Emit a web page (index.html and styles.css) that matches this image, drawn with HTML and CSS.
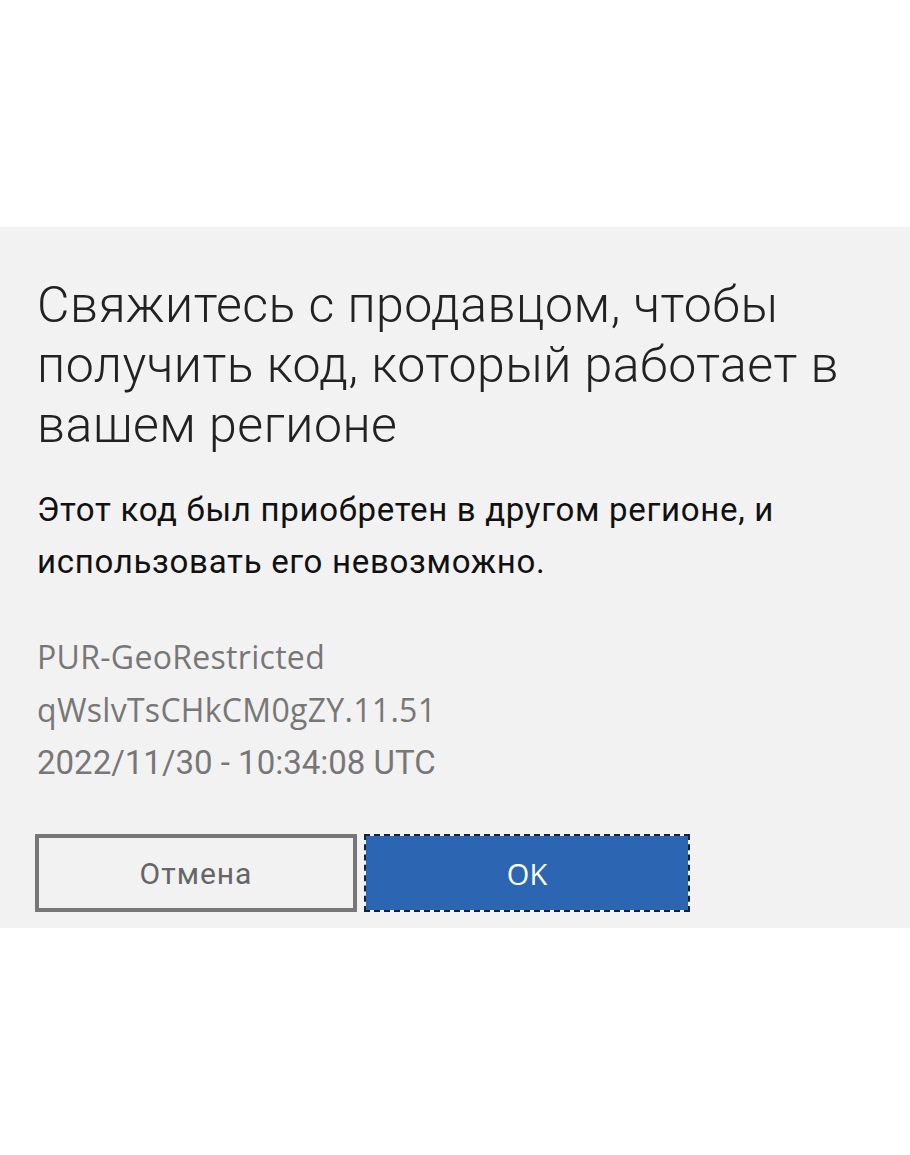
FILE: index.html
```html
<!DOCTYPE html>
<html lang="ru">
<head>
<meta charset="utf-8">
<title>Ошибка</title>
<link rel="stylesheet" href="styles.css">
</head>
<body>
<div class="page">
  <section class="dialog">
    <h1 class="title">Свяжитесь с продавцом, чтобы получить код, который работает в вашем регионе</h1>
    <p class="message">Этот код был приобретен в другом регионе, и использовать его невозможно.</p>
    <div class="codes">
      <div class="code">PUR-GeoRestricted</div>
      <div class="code">qWslvTsCHkCM0gZY.11.51</div>
      <div class="code code-date">2022/11/30 - 10:34:08 UTC</div>
    </div>
    <div class="actions">
      <button class="btn btn-cancel">Отмена</button>
      <button class="btn btn-ok">OK</button>
    </div>
  </section>
</div>
</body>
</html>
```

FILE: styles.css
```css
html, body {
  margin: 0;
  padding: 0;
  background: #ffffff;
}
.page {
  width: 910px;
  height: 1155px;
  padding-top: 227px;
  box-sizing: border-box;
}
.dialog {
  background: #f2f2f2;
  padding: 48px 20px 17px 37px;
  box-sizing: border-box;
  height: 701px;
}
.title {
  margin: 0;
  font-family: Roboto, "Liberation Sans", sans-serif;
  font-weight: 300;
  font-size: 50px;
  letter-spacing: 0.5px;
  line-height: 60px;
  color: #222222;
  max-width: 840px;
}
.message {
  margin: 29px 0 0 0;
  font-family: Roboto, "Liberation Sans", sans-serif;
  font-weight: 400;
  font-size: 33px;
  letter-spacing: 0.7px;
  line-height: 52px;
  color: #111111;
  max-width: 780px;
}
.codes {
  margin-top: 42px;
  font-family: "Open Sans", "Noto Sans", sans-serif;
  font-size: 32px;
  letter-spacing: 0.3px;
  line-height: 53px;
  color: #777777;
}
.code-date {
  font-family: Roboto, "Liberation Sans", sans-serif;
  font-size: 33px;
  letter-spacing: 0;
}
.actions {
  display: flex;
  gap: 7px;
  margin-top: 45px;
  margin-left: -2px;
}
.btn {
  height: 78px;
  box-sizing: border-box;
  cursor: pointer;
}
.btn-cancel {
  width: 322px;
  background: #f2f2f2;
  border: 4px solid #777777;
  color: #666666;
  font-family: Roboto, "Liberation Sans", sans-serif;
  font-size: 30px;
  letter-spacing: 1px;
}
.btn-ok {
  width: 326px;
  background: #2c65b1;
  background-clip: padding-box;
  border: 2px dashed #12223e;
  color: #ffffff;
  font-family: "Open Sans", "Noto Sans", sans-serif;
  font-size: 29px;
}
```
